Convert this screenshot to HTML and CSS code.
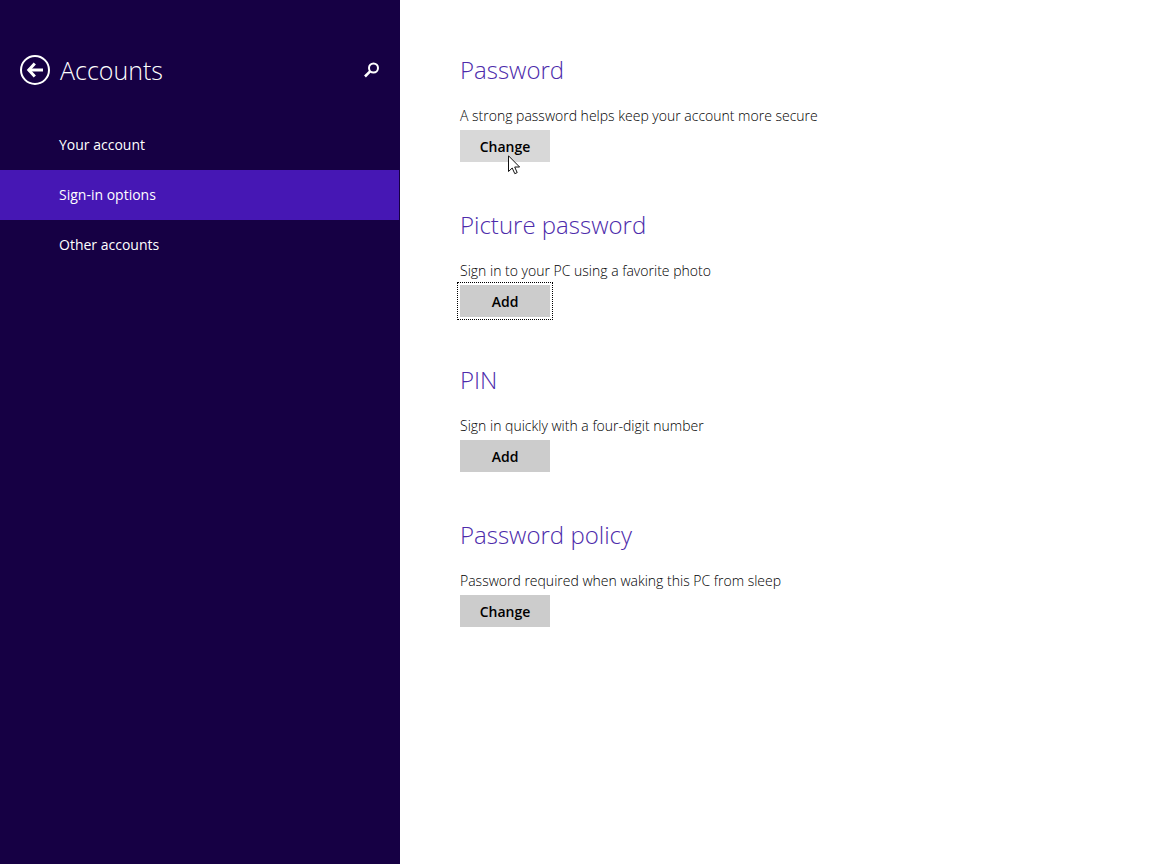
FILE: index.html
```html
<!DOCTYPE html>
<html lang="en">
<head>
    <meta charset="UTF-8">
    <meta name="viewport" content="width=device-width, initial-scale=1.0">
    <title>Accounts</title>
    <link rel="stylesheet" href="styles.css">
</head>
<body>
    <aside class="sidebar">
        <header class="sidebar-header">
            <button class="icon-button" aria-label="Back">
                <svg width="30" height="30" viewBox="0 0 30 30" fill="none" stroke="currentColor">
                    <circle cx="15" cy="15" r="14" stroke-width="2"/>
                    <path d="M8.500 15H23" stroke-width="3"/>
                    <path d="M14.800 8.500L8.800 15L14.800 21.500" stroke-width="3"/>
                </svg>
            </button>
            <h1 class="title">Accounts</h1>
            <button class="icon-button" aria-label="Search">
                <svg width="16" height="16" viewBox="0 0 16 16" fill="none" stroke="currentColor">
                    <circle cx="9.500" cy="6" r="4.500" stroke-width="2"/>
                    <path d="M6.300 9.200L1 14.500" stroke-width="2.600"/>
                </svg>
            </button>
        </header>
        <nav class="menu">
            <a class="menu-item" href="#">Your account</a>
            <a class="menu-item active" href="#" aria-current="page">Sign-in options</a>
            <a class="menu-item" href="#">Other accounts</a>
        </nav>
    </aside>

    <main class="content">
        <section class="option">
            <h2 class="heading">Password</h2>
            <p class="description">A strong password helps keep your account more secure</p>
            <div class="action">
                <button class="button hover">Change</button>
                <svg class="cursor" width="13" height="20" viewBox="0 0 13 20" aria-hidden="true">
                    <path d="M0.500 0.800V16.500L4.200 13L6.800 18.700L9.200 17.600L6.700 12H11.600Z" fill="#fff" stroke="#111"/>
                </svg>
            </div>
        </section>
        <section class="option">
            <h2 class="heading">Picture password</h2>
            <p class="description">Sign in to your PC using a favorite photo</p>
            <div class="action">
                <button class="button focused">Add</button>
            </div>
        </section>
        <section class="option">
            <h2 class="heading">PIN</h2>
            <p class="description">Sign in quickly with a four-digit number</p>
            <div class="action">
                <button class="button">Add</button>
            </div>
        </section>
        <section class="option">
            <h2 class="heading">Password policy</h2>
            <p class="description">Password required when waking this PC from sleep</p>
            <div class="action">
                <button class="button">Change</button>
            </div>
        </section>
    </main>
</body>
</html>
```
FILE: styles.css
```css
:root {
    --sidebar: #160044;
    --selected: #4617b4;
    --accent: #4d2bab;
    --button: #ccc;
}

* {
    margin: 0;
    padding: 0;
    box-sizing: border-box;
}

body {
    display: flex;
    min-height: 100vh;
    background: #fff;
    color: #000;
    font-family: "Segoe UI", "Open Sans", sans-serif;
    font-size: 14px;
    line-height: 20px;
}

.sidebar {
    flex: 0 0 400px;
    padding-top: 52px;
    background: var(--sidebar);
    color: #fff;
}

.sidebar-header {
    display: flex;
    align-items: center;
    gap: 10px;
    padding: 0 20px;
    margin-bottom: 32px;
}

.icon-button {
    display: flex;
    border: none;
    background: none;
    color: #fff;
}

.title,
.heading {
    font-weight: 300;
    line-height: 36px;
}

.title {
    flex: 1;
    font-size: 25px;
}

.menu-item {
    display: block;
    padding: 15px 59px;
    color: #fff;
    text-decoration: none;
}

.menu-item.active {
    margin-right: 1px;
    background: var(--selected);
}

.content {
    flex: 1;
    padding: 52px 60px;
}

.option {
    margin-bottom: 45px;
}

.heading {
    margin-bottom: 18px;
    color: var(--accent);
    font-size: 24px;
}

.description {
    margin-bottom: 4px;
    font-weight: 300;
}

.action {
    position: relative;
}

.button {
    display: block;
    min-width: 90px;
    height: 32px;
    border: none;
    background: var(--button);
    font-family: inherit;
    font-size: 14px;
    font-weight: 600;
}

.button.hover {
    background: #d8d8d8;
}

.button.focused {
    outline: 1px dotted #000;
    outline-offset: 2px;
}

/* mouse pointer resting on the first button */
.cursor {
    position: absolute;
    top: 25px;
    left: 48px;
}
```
